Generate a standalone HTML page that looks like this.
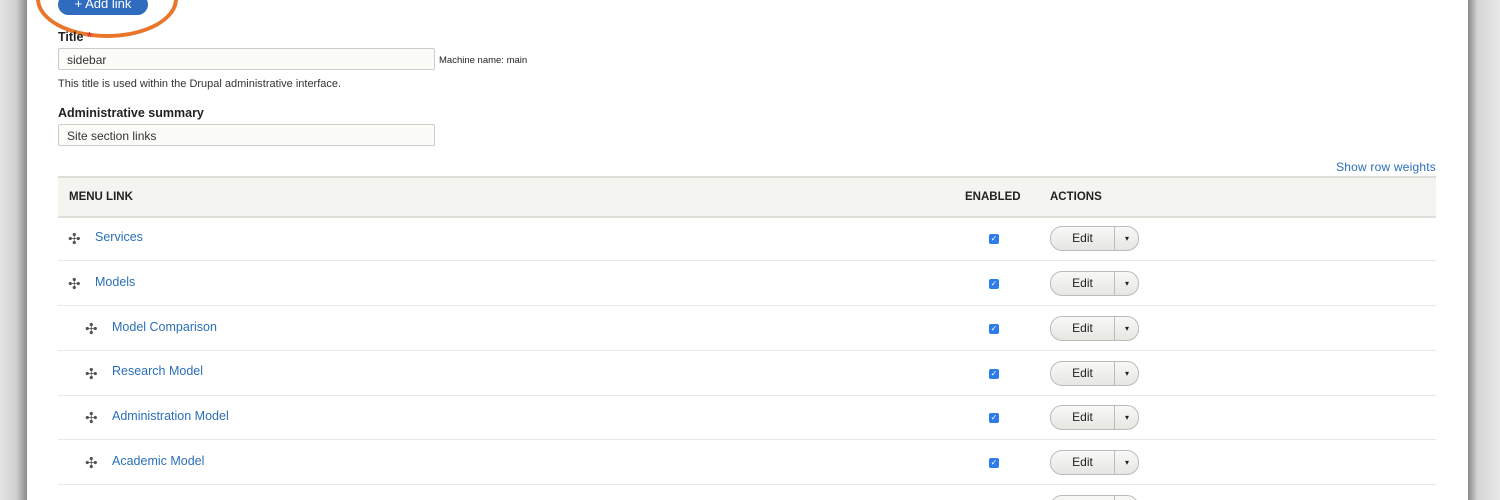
<!DOCTYPE html>
<html style="height:500px;overflow:hidden"><head><style>
body{margin:0;width:1500px;height:500px;overflow:hidden;background:#fff;font-family:"Liberation Sans",sans-serif;position:relative}
.lb{position:absolute;left:0;top:0;width:27px;height:500px;background:linear-gradient(to right,#e4e4e4,#d0d0d0 60%,#8a8a8a)}
.rb{position:absolute;right:0;top:0;width:32px;height:500px;background:linear-gradient(to right,#888,#d6d6d6 30%,#e8e8e8)}
.a{position:absolute}
.btn{left:58px;top:-6px;width:90px;height:21px;border-radius:11px;background:#2f6cc0;color:#fff;font-size:13px;text-align:center;line-height:20px}
.ring{left:36px;top:-40px;width:134px;height:70px;border:4px solid #e8762b;border-radius:50%}
.lbl{font-size:12.5px;font-weight:bold;color:#222}
.inp{height:22px;border:1px solid #ccc;border-radius:2px;background:#fbfbf8;font-size:12px;color:#333;line-height:22px;padding-left:8px;box-sizing:border-box}
.small{font-size:11px;color:#333}
.link{color:#2a6fba;font-size:12.5px}
.row{position:absolute;left:58px;width:1378px;height:44px;border-bottom:1px solid #e8e8e4}
.drag{position:absolute;top:14px;font-size:15px;color:#555}
.cb{position:absolute;left:931px;top:18px;width:10px;height:10px;background:#2d7ce8;border-radius:2px;color:#fff;font-size:8px;line-height:10px;text-align:center}
.edit{position:absolute;left:992px;top:10px;width:87px;height:23px;border:1px solid #bbb;border-radius:12px;background:linear-gradient(#f8f8f6,#e6e6e2);font-size:12px;color:#222}
.edit span{position:absolute;left:0;width:63px;text-align:center;line-height:23px}
.edit i{position:absolute;left:63px;top:0;height:23px;border-left:1px solid #bbb;width:24px;font-style:normal;text-align:center;font-size:8px;line-height:23px}
</style></head><body>
<div class="lb"></div><div class="rb"></div>
<div class="a ring"></div>
<div class="a btn">+ Add link</div>
<div class="a lbl" style="left:58px;top:30px">Title <span style="color:#d33">*</span></div>
<div class="a inp" style="left:58px;top:48px;width:377px">sidebar</div>
<div class="a" style="left:439px;top:55px;font-size:9.5px;color:#222">Machine name: main</div>
<div class="a small" style="left:58px;top:78px">This title is used within the Drupal administrative interface.</div>
<div class="a lbl" style="left:58px;top:106px">Administrative summary</div>
<div class="a inp" style="left:58px;top:124px;width:377px">Site section links</div>
<div class="a link" style="left:1328px;top:160px;font-size:12px;width:108px;text-align:right;letter-spacing:.2px">Show row weights</div>
<div class="a" style="left:58px;top:176px;width:1378px;height:38px;background:#f4f4f0;border-top:2px solid #deded8;border-bottom:2px solid #deded8;font-size:11.5px;font-weight:bold;color:#222">
<span class="a" style="left:11px;top:13px">MENU LINK</span>
<span class="a" style="left:907px;top:13px">ENABLED</span>
<span class="a" style="left:992px;top:13px">ACTIONS</span></div>
<div class="row" style="top:216px"><span class="drag" style="left:10px">✣</span><span class="a link" style="left:37px;top:14px">Services</span><div class="cb">✓</div><div class="edit"><span>Edit</span><i>▾</i></div></div>
<div class="row" style="top:261px"><span class="drag" style="left:10px">✣</span><span class="a link" style="left:37px;top:14px">Models</span><div class="cb">✓</div><div class="edit"><span>Edit</span><i>▾</i></div></div>
<div class="row" style="top:306px"><span class="drag" style="left:27px">✣</span><span class="a link" style="left:54px;top:14px">Model Comparison</span><div class="cb">✓</div><div class="edit"><span>Edit</span><i>▾</i></div></div>
<div class="row" style="top:351px"><span class="drag" style="left:27px">✣</span><span class="a link" style="left:54px;top:13px">Research Model</span><div class="cb">✓</div><div class="edit"><span>Edit</span><i>▾</i></div></div>
<div class="row" style="top:395px"><span class="drag" style="left:27px">✣</span><span class="a link" style="left:54px;top:14px">Administration Model</span><div class="cb">✓</div><div class="edit"><span>Edit</span><i>▾</i></div></div>
<div class="row" style="top:440px"><span class="drag" style="left:27px">✣</span><span class="a link" style="left:54px;top:14px">Academic Model</span><div class="cb">✓</div><div class="edit"><span>Edit</span><i>▾</i></div></div>
<div class="a" style="left:58px;top:485px;width:1378px;height:15px;overflow:hidden"><div class="edit"><span>Edit</span><i>▾</i></div></div>
</body></html>
